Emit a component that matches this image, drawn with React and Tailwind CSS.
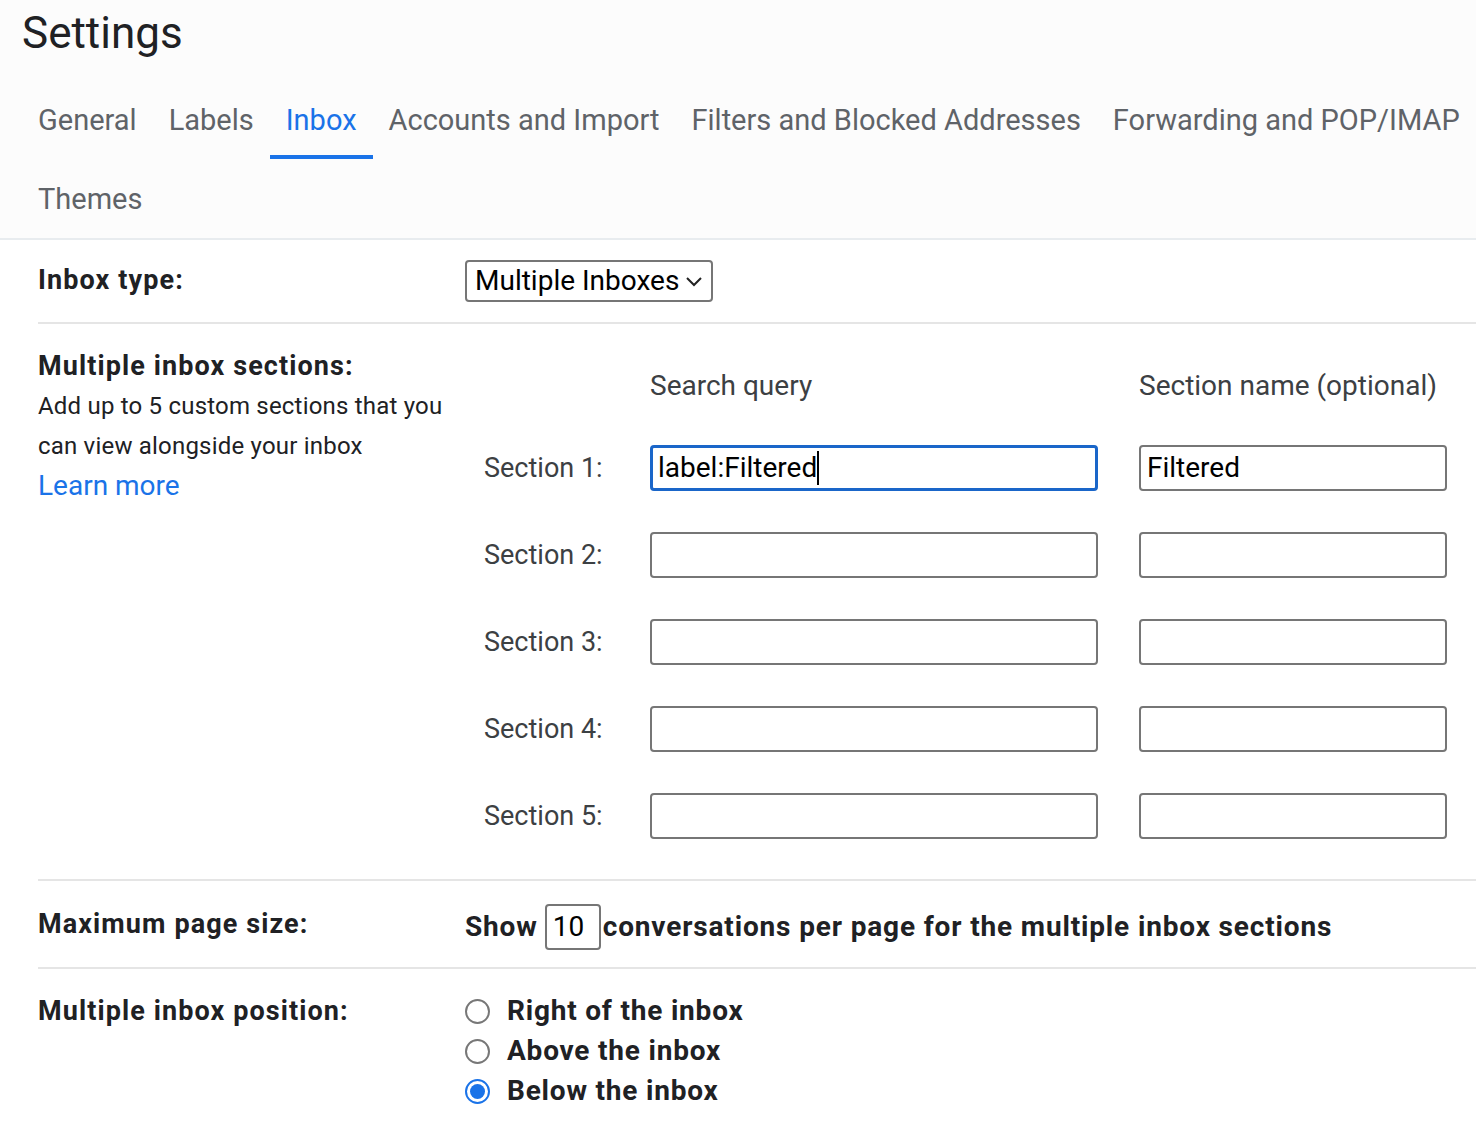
import React from 'react';

const tabs = ['General', 'Labels', 'Inbox', 'Accounts and Import', 'Filters and Blocked Addresses', 'Forwarding and POP/IMAP', 'Themes'];

const sections = [
  { query: 'label:Filtered', name: 'Filtered', focused: true },
  { query: '', name: '' },
  { query: '', name: '' },
  { query: '', name: '' },
  { query: '', name: '' },
];

const Radio = ({ checked }) => (
  checked ? (
    <span className="w-[25px] h-[25px] rounded-full border-[2px] border-[#1a73e8] flex items-center justify-center shrink-0">
      <span className="w-[15px] h-[15px] rounded-full bg-[#1a73e8]" />
    </span>
  ) : (
    <span className="w-[25px] h-[25px] rounded-full border-[2px] border-[#777] shrink-0" />
  )
);

export default function App() {
  return (
    <div className="min-h-[1122px] bg-white text-[#202124] font-['Roboto','Liberation_Sans',sans-serif]">
      <div className="bg-[#fcfcfc] border-b-2 border-[#e8ecef]">
        <h1 className="pl-[22px] h-[80px] text-[44px] leading-[66px] text-[#202124]">Settings</h1>
        <div className="flex flex-wrap pl-[22px]">
          {tabs.map((t) => (
            <div
              key={t}
              className={`h-[79px] px-[16px] pt-[6px] flex items-center text-[29px] border-b-4 ${t === 'Inbox' ? 'text-[#1a73e8] border-[#1a73e8]' : 'text-[#5f6368] border-transparent'}`}
            >
              {t}
            </div>
          ))}
        </div>
      </div>

      <div className="pl-[38px]">
        <div className="flex items-center h-[84px] border-b-2 border-[#e5e5e5]">
          <div className="w-[427px] text-[27px] font-bold tracking-[1.1px] -mt-[1px]">Inbox type:</div>
          <div className="h-[42px] w-[248px] border-2 border-[#767676] rounded-[4px] flex items-center pl-[8px] pr-[8px] justify-between text-[28px] text-black">
            <span>Multiple Inboxes</span>
            <svg width="18" height="12" viewBox="0 0 18 12" fill="none" stroke="#222" strokeWidth="2">
              <path d="M2 3l7 7 7-7" />
            </svg>
          </div>
        </div>

        <div className="flex border-b-2 border-[#e5e5e5] pt-[22px] pb-[40px]">
          <div className="w-[427px]">
            <div className="text-[27px] font-bold tracking-[1.1px] leading-[40px]">Multiple inbox sections:</div>
            <div className="text-[24px] tracking-[0.2px] leading-[40px] text-[#202124]">Add up to 5 custom sections that you<br />can view alongside your inbox</div>
            <div className="text-[28px] leading-[40px] text-[#1a73e8]">Learn more</div>
          </div>
          <div className="flex-1">
            <div className="flex h-[99px] pt-[19px] text-[28px] text-[#3c4043]">
              <div className="w-[185px]" />
              <div className="w-[489px]">Search query</div>
              <div>Section name (optional)</div>
            </div>
            <div className="flex flex-col gap-[41px]">
              {sections.map((s, i) => (
                <div key={i} className="flex items-center h-[46px]">
                  <div className="w-[185px] pl-[19px] text-[27px] text-[#3c4043]">Section {i + 1}:</div>
                  <div className={`w-[448px] h-[46px] rounded-[4px] flex items-center pl-[5px] text-[28px] text-black ${s.focused ? 'border-[3px] border-[#1a66c9]' : 'border-2 border-[#767676]'}`}>
                    {s.query}
                    {s.focused && <span className="w-[2px] h-[34px] bg-black" />}
                  </div>
                  <div className="w-[41px]" />
                  <div className="w-[308px] h-[46px] rounded-[4px] border-2 border-[#767676] flex items-center pl-[6px] text-[28px] text-black">
                    {s.name}
                  </div>
                </div>
              ))}
            </div>
          </div>
        </div>

        <div className="flex items-center h-[88px] border-b-2 border-[#e5e5e5]">
          <div className="w-[427px] text-[27px] font-bold tracking-[1.1px]">Maximum page size:</div>
          <div className="flex items-center text-[28px] font-bold tracking-[0.85px] mt-[6px]">
            <span>Show</span>
            <span className="ml-[7px] mr-[2px] w-[56px] h-[46px] border-2 border-[#767676] rounded-[4px] flex items-center pl-[6px] font-normal tracking-normal text-[28px] text-black">10</span>
            <span>conversations per page for the multiple inbox sections</span>
          </div>
        </div>

        <div className="flex pt-[22px]">
          <div className="w-[427px] text-[27px] font-bold tracking-[1.1px] leading-[40px]">Multiple inbox position:</div>
          <div className="flex flex-col">
            {['Right of the inbox', 'Above the inbox', 'Below the inbox'].map((l, i) => (
              <div key={l} className="flex items-center gap-[17px] h-[40px]">
                <Radio checked={i === 2} />
                <span className="text-[28px] font-bold tracking-[0.8px]">{l}</span>
              </div>
            ))}
          </div>
        </div>
      </div>
    </div>
  );
}
